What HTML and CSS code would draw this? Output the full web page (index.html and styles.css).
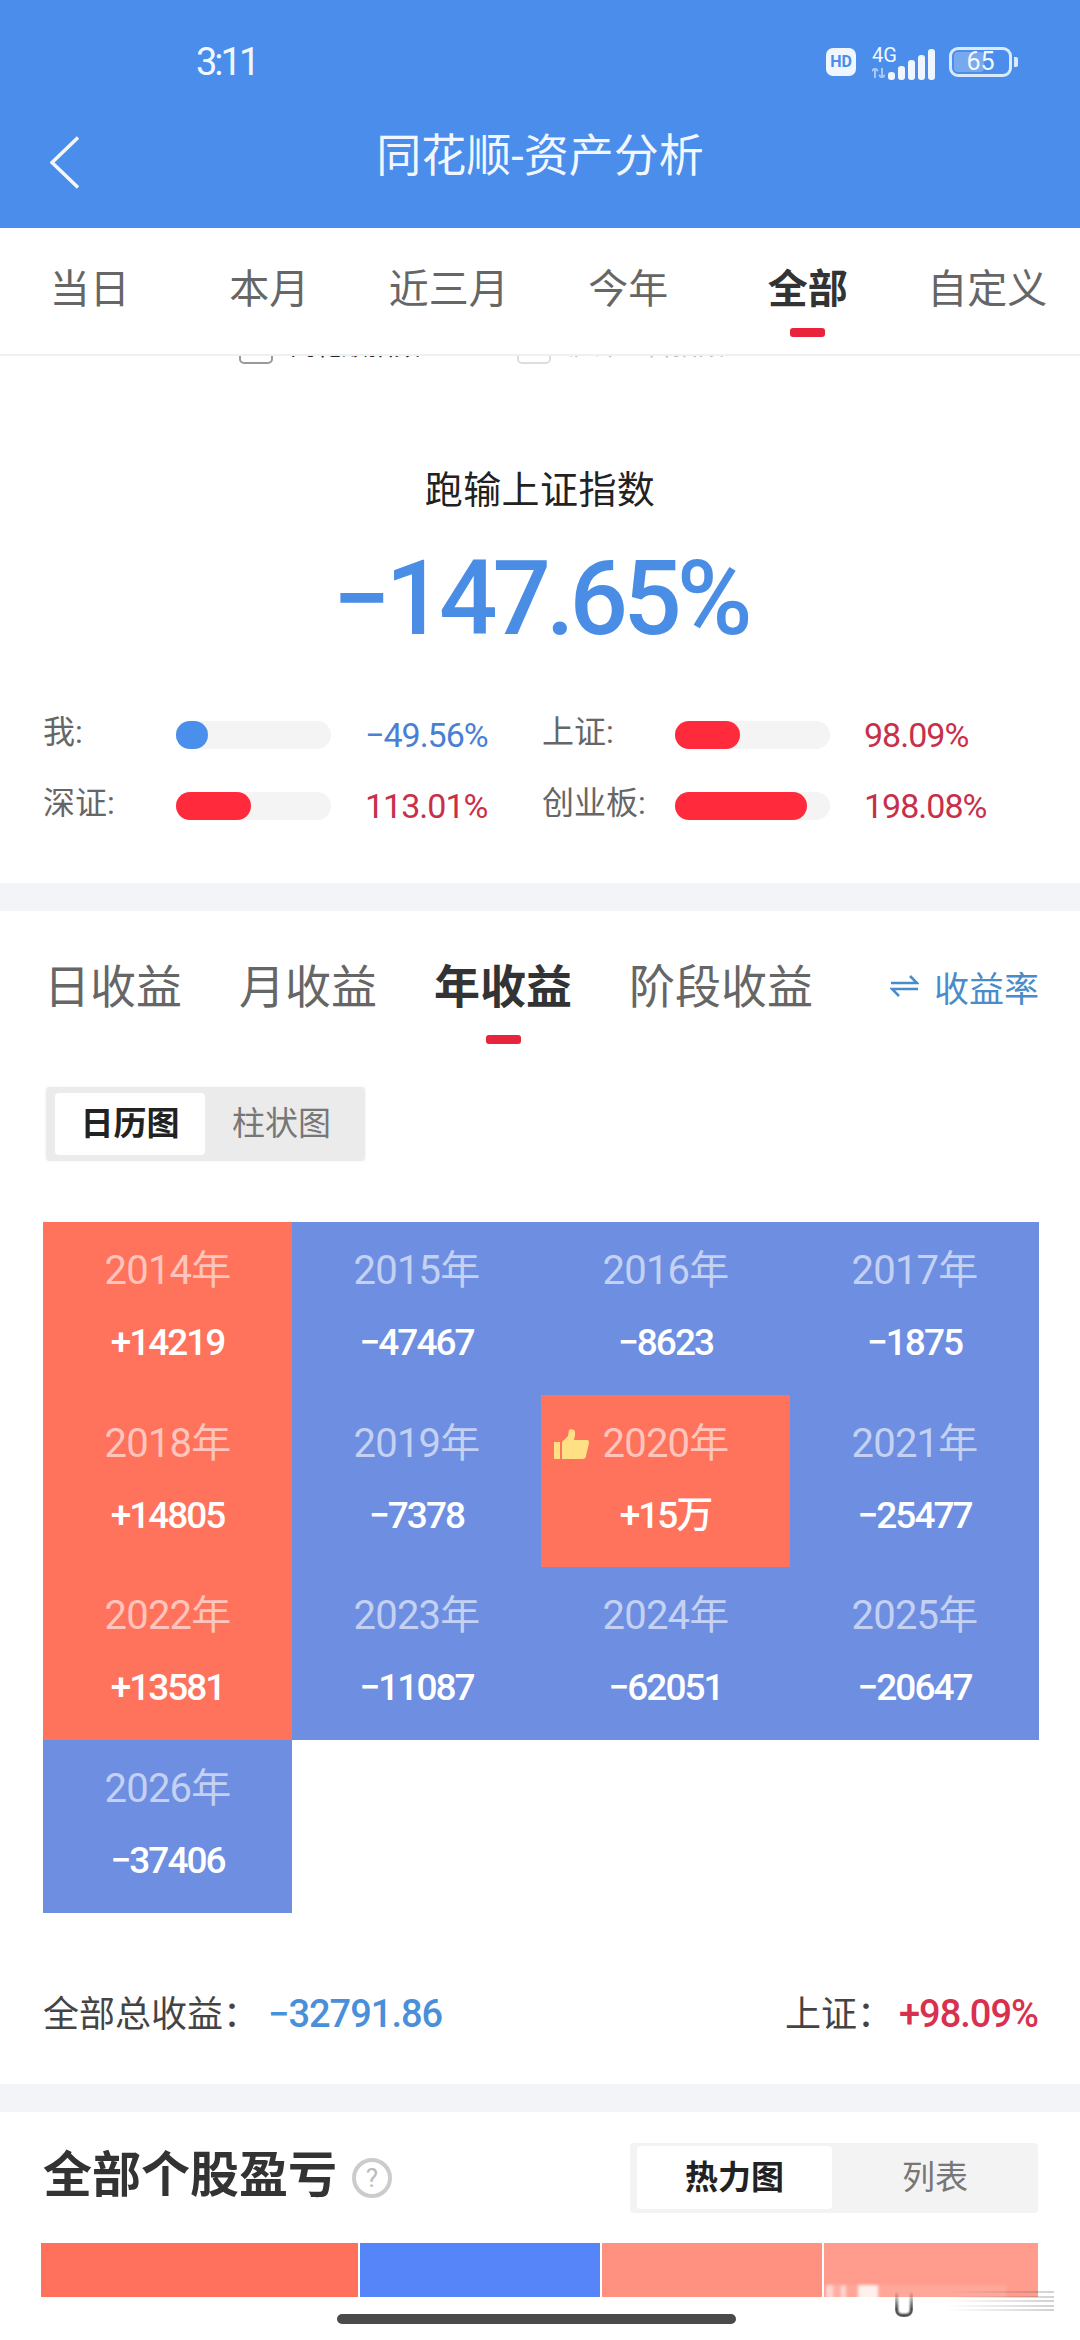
FILE: index.html
```html
<!DOCTYPE html>
<html>

<head>
  <title>同花顺-资产分析</title>
  <link rel="stylesheet" href="styles.css">
</head>

<body>
  <header class="topbar">
    <div class="status">
      <span class="clock">3:11</span>
      <div class="statusIcons">
        <span class="hd">HD</span>
        <div class="net">
          <span class="netLabel">4G</span>
          <svg width="13" height="10" viewBox="0 0 13 10"><path d="M3 0v10M0 3l3-3 3 3M10 10V0M7 7l3 3 3-3" fill="none" stroke="#a9c8f5" stroke-width="2"/></svg>
        </div>
        <div class="signal">
          <i class="bar1"></i><i class="bar2"></i><i class="bar3"></i><i class="bar4"></i><i class="bar5"></i>
        </div>
        <div class="battery">
          <div class="batteryBody"><span class="batteryFill"></span><span class="batteryText">65</span></div>
          <span class="batteryTip"></span>
        </div>
      </div>
    </div>
    <div class="nav">
      <svg class="back" width="29" height="53" viewBox="0 0 29 53"><path d="M28 1.5 2 26.5 28 51.5" fill="none" stroke="#f2f7ff" stroke-width="3.5"/></svg>
      <h1>同花顺-资产分析</h1>
    </div>
  </header>

  <nav class="tabs">
    <div class="tab">当日</div>
    <div class="tab">本月</div>
    <div class="tab">近三月</div>
    <div class="tab">今年</div>
    <div class="tab active">全部</div>
    <div class="tab">自定义</div>
  </nav>

  <div class="peek">
    <div class="peekItem"><span class="box"></span><span class="peekText">同花顺指数</span></div>
    <div class="peekItem off"><span class="box"></span><span class="peekText">沪深三百指数</span></div>
  </div>

  <section class="compare">
    <div class="compareTitle">跑输上证指数</div>
    <div class="compareValue">−147.65%</div>
    <div class="stats">
      <div class="stat">
        <span class="statLabel">我:</span>
        <span class="track"><span class="fill blue" style="width: 32px"></span></span>
        <span class="statValue down">−49.56%</span>
      </div>
      <div class="stat">
        <span class="statLabel">上证:</span>
        <span class="track"><span class="fill" style="width: 65px"></span></span>
        <span class="statValue">98.09%</span>
      </div>
      <div class="stat">
        <span class="statLabel">深证:</span>
        <span class="track"><span class="fill" style="width: 75px"></span></span>
        <span class="statValue">113.01%</span>
      </div>
      <div class="stat">
        <span class="statLabel">创业板:</span>
        <span class="track"><span class="fill" style="width: 132px"></span></span>
        <span class="statValue">198.08%</span>
      </div>
    </div>
  </section>

  <div class="gap"></div>

  <section class="income">
    <div class="incomeTabs">
      <div class="incomeTab">日收益</div>
      <div class="incomeTab">月收益</div>
      <div class="incomeTab active">年收益</div>
      <div class="incomeTab">阶段收益</div>
      <div class="rate">
        <svg width="29" height="22" viewBox="0 0 29 22"><path d="M1 8h26L20 1M28 14H2l7 7" fill="none" stroke="#4a8bc9" stroke-width="2.5"/></svg>
        <span>收益率</span>
      </div>
    </div>

    <div class="switch">
      <span class="switchItem on">日历图</span>
      <span class="switchItem">柱状图</span>
    </div>

    <div class="calendar">
      <div class="cell up"><span class="year">2014年</span><span class="amount">+14219</span></div>
      <div class="cell"><span class="year">2015年</span><span class="amount">−47467</span></div>
      <div class="cell"><span class="year">2016年</span><span class="amount">−8623</span></div>
      <div class="cell"><span class="year">2017年</span><span class="amount">−1875</span></div>
      <div class="cell up"><span class="year">2018年</span><span class="amount">+14805</span></div>
      <div class="cell"><span class="year">2019年</span><span class="amount">−7378</span></div>
      <div class="cell up best">
        <svg class="thumb" width="35" height="30" viewBox="0 0 35 30"><path d="M0 13h6v17H0zM8 13 14 7 15 1c0-1 4-1 5 0 2 2 1 6 0 10h13c2 0 2 2 2 3l-3 13c0 2-2 3-3 3H8z" fill="#ffe084"/></svg>
        <span class="year">2020年</span><span class="amount">+15万</span>
      </div>
      <div class="cell"><span class="year">2021年</span><span class="amount">−25477</span></div>
      <div class="cell up"><span class="year">2022年</span><span class="amount">+13581</span></div>
      <div class="cell"><span class="year">2023年</span><span class="amount">−11087</span></div>
      <div class="cell"><span class="year">2024年</span><span class="amount">−62051</span></div>
      <div class="cell"><span class="year">2025年</span><span class="amount">−20647</span></div>
      <div class="cell"><span class="year">2026年</span><span class="amount">−37406</span></div>
    </div>

    <div class="total">
      <div>全部总收益：<span class="totalValue">−32791.86</span></div>
      <div>上证：<span class="totalIndex">+98.09%</span></div>
    </div>
  </section>

  <div class="gap"></div>

  <section class="stocks">
    <div class="stocksHead">
      <h2>全部个股盈亏</h2>
      <span class="help">?</span>
      <div class="switch small">
        <span class="switchItem on">热力图</span>
        <span class="switchItem">列表</span>
      </div>
    </div>
    <div class="heat">
      <span class="heat1"></span>
      <span class="heat2"></span>
      <span class="heat3"></span>
      <span class="heat4"></span>
    </div>
    <div class="homeBar"></div>
  </section>

  <div class="watermark">
    <span class="wmStripes"></span>
    <span class="wmU"></span>
    <span class="wmLines"></span>
  </div>
</body>

</html>
```

FILE: styles.css
```css
*, *::before, *::after {
  box-sizing: border-box;
}
html, body {
  margin: 0;
  padding: 0;
}
body {
  position: relative;
  width: 1080px;
  height: 2340px;
  overflow: hidden;
  background: white;
  color: #333;
  font-family: Roboto, "Noto Sans CJK SC", sans-serif;
}

/* top bar */
.topbar {
  height: 228px;
  padding-top: 40px;
  background: #4a8dea;
  color: #f2f7ff;
}
.status {
  display: flex;
  align-items: center;
  height: 44px;
  padding-left: 196px;
}
.clock {
  font-size: 38px;
  letter-spacing: -3px;
}
.statusIcons {
  display: flex;
  align-items: center;
  margin-left: auto;
  padding-right: 62px;
}
.hd {
  width: 30px;
  height: 28px;
  background: #f0f6ff;
  border-radius: 7px;
  color: #4a8dea;
  font-size: 16px;
  font-weight: 700;
  line-height: 28px;
  text-align: center;
}
.net {
  display: flex;
  flex-direction: column;
  width: 16px;
  margin-left: 16px;
  margin-top: -2px;
}
.netLabel {
  font-size: 20px;
  line-height: 20px;
  white-space: nowrap;
}
.net svg {
  margin-top: 3px;
}
.signal {
  display: flex;
  align-items: flex-end;
  gap: 3px;
  height: 32px;
  margin-top: 3px;
}
.signal i {
  display: block;
  width: 7px;
  background: #f0f6ff;
  border-radius: 3px;
}
.bar1 { height: 8px; }
.bar2 { height: 14px; }
.bar3 { height: 20px; }
.bar4 { height: 25px; }
.bar5 { height: 31px; }
.battery {
  display: flex;
  align-items: center;
  margin-left: 14px;
}
.batteryBody {
  position: relative;
  width: 63px;
  height: 30px;
  border: 3px solid #dbe9fc;
  border-radius: 9px;
  text-align: center;
  font-size: 25px;
  line-height: 24px;
}
.batteryFill {
  position: absolute;
  top: 2px;
  left: 2px;
  bottom: 2px;
  width: 30px;
  background: #78a9ef;
  border-radius: 4px;
}
.batteryText {
  position: relative;
}
.batteryTip {
  width: 4px;
  height: 10px;
  margin-left: 2px;
  background: #dbe9fc;
  border-radius: 0 2px 2px 0;
}
.nav {
  position: relative;
  margin-top: 38px;
  height: 70px;
  text-align: center;
}
.back {
  position: absolute;
  top: 14px;
  left: 50px;
}
h1 {
  margin: 0;
  font-size: 45px;
  font-weight: 400;
  line-height: 70px;
}

/* period tabs */
.tabs {
  display: grid;
  grid-template-columns: repeat(6, 1fr);
  height: 128px;
  padding-top: 40px;
  padding-right: 3px;
  border-bottom: 2px solid #f0f0f0;
}
.tab {
  display: flex;
  flex-direction: column;
  align-items: center;
  color: #666;
  font-size: 40px;
  line-height: 44px;
  white-space: nowrap;
}
.tab.active {
  color: #333;
  font-weight: 700;
}
.tab.active::after {
  content: "";
  width: 35px;
  height: 9px;
  margin-top: 16px;
  background: #e8243c;
  border-radius: 3px;
}

/* checkboxes scrolled under the tabs */
.peek {
  display: flex;
  height: 8px;
  overflow: hidden;
  padding-left: 239px;
  font-size: 26px;
  color: #222;
}
.peekItem {
  display: flex;
  align-items: center;
  gap: 17px;
  width: 278px;
  height: 34px;
  margin-top: -26px;
}
.peekText {
  margin-top: -7px;
}
.box {
  width: 34px;
  height: 34px;
  border: 2px solid #999;
  border-radius: 5px;
}
.peekItem.off {
  color: #bbb;
}
.peekItem.off .box {
  border-color: #ddd;
}

/* compare to index */
.compare {
  height: 519px;
  padding-top: 101px;
  text-align: center;
}
.compareTitle {
  color: #222;
  font-size: 38px;
  letter-spacing: 0.4px;
  line-height: 50px;
}
.compareValue {
  margin-top: 24px;
  color: #4a8de4;
  font-size: 103px;
  font-weight: 500;
  letter-spacing: -5px;
  line-height: 120px;
}
.stats {
  display: grid;
  grid-template-columns: 499px 499px;
  row-gap: 31px;
  margin-top: 56px;
  padding-left: 43px;
  text-align: left;
}
.stat {
  display: grid;
  grid-template-columns: 133px 155px auto;
  grid-template-rows: 40px;
  align-items: center;
  height: 40px;
}
.statLabel {
  padding-bottom: 6px;
  color: #666;
  font-size: 32px;
  line-height: 32px;
  white-space: nowrap;
}
.track {
  display: block;
  height: 28px;
  background: #f4f4f5;
  border-radius: 14px;
}
.fill {
  display: block;
  height: 28px;
  background: #ff2a3c;
  border-radius: 14px;
}
.fill.blue {
  background: #4a8fec;
}
.statValue {
  margin-left: 34px;
  color: #c8304a;
  font-size: 34px;
  letter-spacing: -1px;
  line-height: 40px;
}
.statValue.down {
  color: #4a7fd4;
}

.gap {
  height: 28px;
  background: #f3f4f8;
}

/* yearly income */
.income {
  padding-top: 46px;
}
.incomeTabs {
  display: flex;
  align-items: flex-start;
  gap: 57px;
  padding: 0 41px 0 44px;
}
.incomeTab {
  display: flex;
  flex-direction: column;
  align-items: center;
  color: #666;
  font-size: 46px;
  line-height: 60px;
}
.incomeTab.active {
  color: #333;
  font-weight: 700;
}
.incomeTab.active::after {
  content: "";
  width: 35px;
  height: 9px;
  margin-top: 18px;
  background: #e8243c;
  border-radius: 3px;
}
.rate {
  display: flex;
  align-items: center;
  gap: 15px;
  height: 58px;
  margin-left: auto;
  color: #4a8bc9;
  font-size: 35px;
}
.switch {
  display: flex;
  width: 319px;
  height: 74px;
  margin-top: 43px;
  margin-left: 46px;
  padding: 6px 7px 6px 9px;
  background: #ebebeb;
  box-shadow: 0 0 3px #eee;
  border-radius: 4px;
}
.switchItem {
  flex: 1;
  color: #777;
  font-size: 33px;
  line-height: 62px;
  text-align: center;
}
.switchItem.on {
  flex: none;
  width: 150px;
  background: white;
  border-radius: 4px;
  color: #222;
  font-weight: 700;
}
.calendar {
  display: grid;
  grid-template-columns: repeat(4, 249px);
  grid-auto-rows: 172.7px;
  margin: 61px 0 0 43px;
}
.cell {
  position: relative;
  display: flex;
  flex-direction: column;
  align-items: center;
  padding-top: 24px;
  background: #6e8fe1;
  color: white;
}
.cell.up {
  background: #ff725b;
}
.year {
  color: rgba(255, 255, 255, 0.6);
  font-size: 40px;
  letter-spacing: -0.8px;
  line-height: 50px;
}
.amount {
  margin-top: 22px;
  font-size: 37px;
  font-weight: 500;
  letter-spacing: -2px;
  line-height: 50px;
}
.thumb {
  position: absolute;
  top: 34px;
  left: 13px;
}
.total {
  display: flex;
  justify-content: space-between;
  height: 44px;
  margin: 79px 42px 48px 43px;
  color: #444;
  font-size: 36px;
  line-height: 44px;
}
.totalValue {
  margin-left: 9px;
  color: #4a90d9;
  font-size: 38px;
  font-weight: 500;
  letter-spacing: -1px;
}
.totalIndex {
  margin-left: 6px;
  color: #d9304f;
  font-size: 38px;
  font-weight: 500;
  letter-spacing: -1px;
}

/* stock profit and loss */
.stocks {
  padding-top: 31px;
}
.stocksHead {
  display: flex;
  align-items: center;
  height: 70px;
  padding: 0 42px 0 43px;
}
h2 {
  margin: 0 0 4px;
  color: #333;
  font-size: 49px;
  font-weight: 700;
  line-height: 60px;
}
.help {
  width: 40px;
  height: 40px;
  margin-left: 15px;
  border: 4px solid #ccc;
  border-radius: 50%;
  color: #bbb;
  font-size: 26px;
  line-height: 32px;
  text-align: center;
}
.switch.small {
  width: 408px;
  height: 70px;
  margin: 0 0 0 auto;
  padding: 3px 0 4px 7px;
  background: #f3f3f3;
  box-shadow: none;
}
.switch.small .switchItem {
  line-height: 63px;
}
.switch.small .switchItem.on {
  width: 195px;
}
.heat {
  display: flex;
  gap: 2px;
  height: 54px;
  margin: 30px 42px 0 41px;
}
.heat span {
  display: block;
}
.heat1 { width: 317px; background: #ff715c; }
.heat2 { width: 240px; background: #5585f8; }
.heat3 { width: 220px; background: #ff9180; }
.heat4 { width: 214px; background: #ff9c8d; }
.homeBar {
  width: 399px;
  height: 10px;
  margin: 17px 0 0 337px;
  background: #4a4a4a;
  border-radius: 5px;
}

/* photo watermark lying over the bottom corner */
.watermark {
  position: absolute;
  left: 826px;
  top: 2285px;
  width: 230px;
  height: 34px;
}
.wmStripes {
  position: absolute;
  top: 0;
  left: 0;
  width: 180px;
  height: 32px;
  background: linear-gradient(90deg, rgba(255, 255, 255, 0.6) 0 7px, rgba(255, 255, 255, 0.2) 7px 15px, rgba(255, 255, 255, 0.6) 15px 20px, rgba(255, 255, 255, 0.1) 20px 32px, rgba(255, 255, 255, 0.85) 32px 52px, rgba(255, 255, 255, 0.12) 52px 180px);
  filter: blur(1.5px);
}
.wmU {
  position: absolute;
  left: 69px;
  top: 6px;
  width: 18px;
  height: 26px;
  border: 3px solid #222;
  border-top: none;
  border-radius: 0 0 7px 7px;
  filter: blur(1px);
  -webkit-mask-image: linear-gradient(transparent, black 70%);
  mask-image: linear-gradient(transparent, black 70%);
}
.wmLines {
  position: absolute;
  left: 120px;
  top: 6px;
  width: 108px;
  height: 22px;
  background: repeating-linear-gradient(180deg, rgba(90, 90, 90, 0.28) 0 2px, transparent 2px 4.6px);
  -webkit-mask-image: linear-gradient(90deg, transparent, black);
  mask-image: linear-gradient(90deg, transparent, black);
}
```
